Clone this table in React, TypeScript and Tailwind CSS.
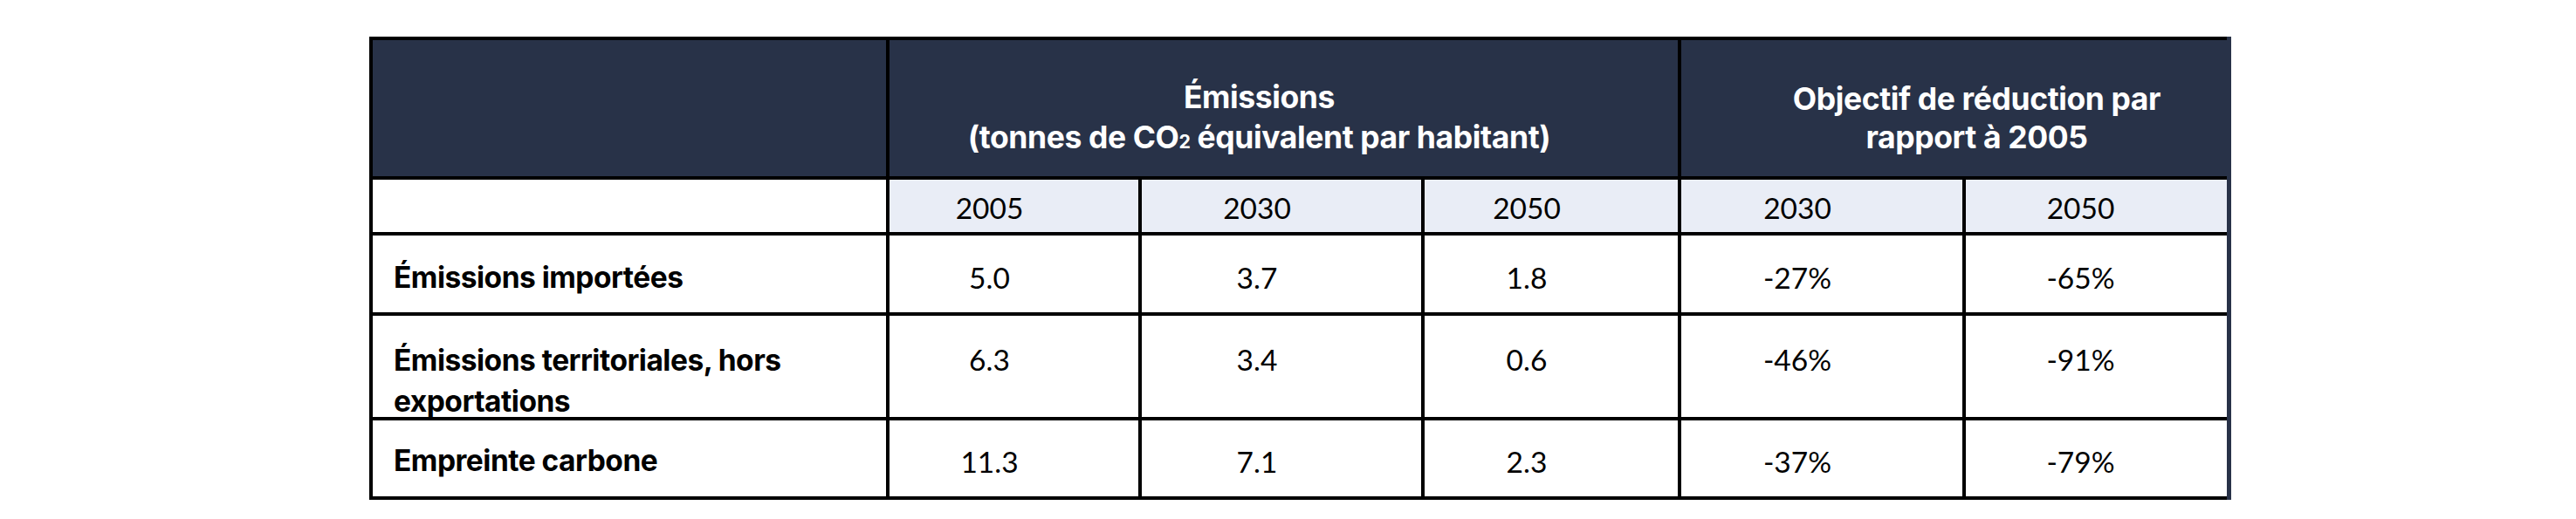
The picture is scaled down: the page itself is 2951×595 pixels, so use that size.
import React from 'react';

type Row = {
    label: string;
    values: string[];
    pad: string;
    labelPad: string;
};

const rows: Row[] = [
    { label: 'Émissions importées', values: ['5.0', '3.7', '1.8', '-27%', '-65%'], pad: 'pt-[29px]', labelPad: 'pt-[26px]' },
    { label: 'Émissions territoriales, hors exportations', values: ['6.3', '3.4', '0.6', '-46%', '-91%'], pad: 'pt-[31px]', labelPad: 'pt-[28px] leading-[47px]' },
    { label: 'Empreinte carbone', values: ['11.3', '7.1', '2.3', '-37%', '-79%'], pad: 'pt-[28px]', labelPad: 'pt-[24px]' },
];

const years = ['2005', '2030', '2050', '2030', '2050'];

// last column sits a bit further right than the others
const valuePad = (i: number) => (i === 4 ? 'pr-[36px]' : 'pr-[56px]');

export default function App() {
    return (
        <div className="min-h-[595px] bg-white pl-[423px] pt-[42px]">
            <div
                className="inline-grid grid-cols-[588px_285px_320px_290px_322px_299px] grid-rows-[156px_60px_88px_116px_87px] gap-[4px] bg-black pl-[4px] pt-[4px] pb-[4px] border-r-[5px] border-[#283248]"
            >
                {/* header */}
                <div className="bg-[#283248]" />
                <div className="col-span-3 bg-[#283248] flex items-center justify-center pt-[22px] pr-[56px] text-center text-white font-bold text-[35.5px] leading-[46px] tracking-[-0.4px] font-['Inter',sans-serif]">
                    <div>
                        Émissions
                        <br />
                        (tonnes de CO<sub className="text-[0.6em] bottom-0">2</sub> équivalent par habitant)
                    </div>
                </div>
                <div className="col-span-2 bg-[#283248] flex items-center justify-center pt-[24px] pl-[52px] text-center text-white font-bold text-[35.5px] leading-[44px] tracking-[-0.4px] font-['Inter',sans-serif]">
                    <div>
                        Objectif de réduction par
                        <br />
                        rapport à 2005
                    </div>
                </div>

                {/* years */}
                <div className="bg-white" />
                {years.map((y, i) => (
                    <div
                        key={i}
                        className={`bg-[#e9edf6] flex items-center justify-center pt-[3px] ${valuePad(i)} text-[33.5px] leading-[38px] text-black font-['Lato',sans-serif]`}
                    >
                        {y}
                    </div>
                ))}

                {/* body */}
                {rows.map((r) => (
                    <React.Fragment key={r.label}>
                        <div className={`bg-white pl-[24px] pr-[20px] leading-[44px] ${r.labelPad} text-[33.5px] font-bold text-black tracking-[-0.5px] font-['Inter',sans-serif]`}>
                            {r.label}
                        </div>
                        {r.values.map((v, i) => (
                            <div
                                key={i}
                                className={`bg-white text-center ${r.pad} ${valuePad(i)} text-[33.5px] leading-[38px] text-black font-['Lato',sans-serif]`}
                            >
                                {v}
                            </div>
                        ))}
                    </React.Fragment>
                ))}
            </div>
        </div>
    );
}
